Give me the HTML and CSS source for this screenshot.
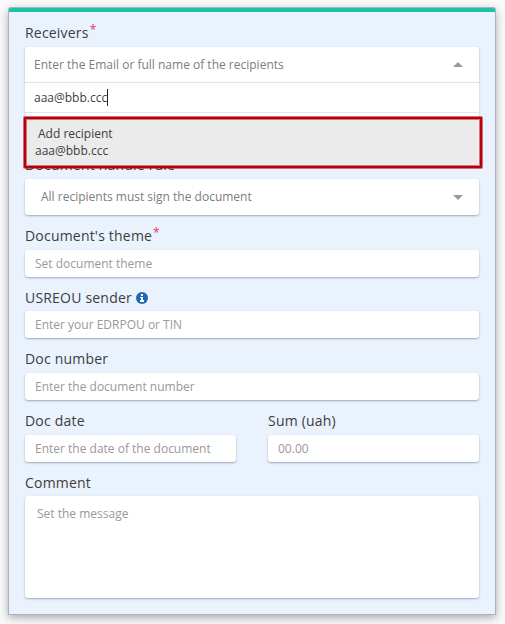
FILE: index.html
```html
<!DOCTYPE html>
<html lang="en">
<head>
<meta charset="utf-8">
<title>Document details</title>
<link rel="stylesheet" href="styles.css">
</head>
<body>
<form class="card">
  <div class="field">
    <div class="label">Receivers<span class="required">*</span></div>
    <div class="select open">
      <span>Enter the Email or full name of the recipients</span>
      <svg class="arrow" viewBox="0 0 10 5"><path d="M0 5 5 0l5 5z"/></svg>
      <div class="dropdown">
        <div class="search"><span class="typed">aaa@bbb.ccc</span><span class="caret"></span></div>
        <div class="option"><span class="option-title">Add recipient</span><span>aaa@bbb.ccc</span></div>
      </div>
    </div>
  </div>
  <div class="field rule">
    <div class="label">Document handle rule</div>
    <div class="select indented">
      <span>All recipients must sign the document</span>
      <svg class="arrow" viewBox="0 0 10 5"><path d="M0 0h10L5 5z"/></svg>
    </div>
  </div>
  <div class="field">
    <div class="label">Document's theme<span class="required">*</span></div>
    <div class="input">Set document theme</div>
  </div>
  <div class="field">
    <div class="label tight">USREOU sender
      <svg class="info" viewBox="0 0 12 12"><circle cx="6" cy="6" r="6" fill="#2068b3"/><path fill="#fff" d="M5 2h2v2H5zM4 5h3v3h1v2H4V8h1V6H4z"/></svg>
    </div>
    <div class="input">Enter your EDRPOU or TIN</div>
  </div>
  <div class="field">
    <div class="label">Doc number</div>
    <div class="input">Enter the document number</div>
  </div>
  <div class="columns">
    <div class="field">
      <div class="label">Doc date</div>
      <div class="input">Enter the date of the document</div>
    </div>
    <div class="field">
      <div class="label">Sum (uah)</div>
      <div class="input">00.00</div>
    </div>
  </div>
  <div class="field">
    <div class="label tight">Comment</div>
    <div class="textarea">Set the message</div>
  </div>
</form>
</body>
</html>
```
FILE: styles.css
```css
* { box-sizing: border-box; }

body {
  margin: 0;
  height: 624px;
  padding: 8px 10px 10px 9px;
  overflow: hidden;
  background: #f9f9fb;
  color: #3d3d3d;
  font: 12px/18px "Open Sans", "Noto Sans", sans-serif;
}

.card {
  height: 606px;
  padding: 11px 16px 16px;
  border-top: 4px solid #1cc4a3;
  border-radius: 2px 2px 0 0;
  background: #eaf2fe;
  box-shadow: 0 0 0 1px #a9b2bd, 0 3px 9px 1px rgba(0, 0, 0, .3);
  display: flex;
  flex-direction: column;
  gap: 11px;
}

.label {
  height: 24px;
  font-size: 14px;
  line-height: 20px;
  letter-spacing: .2px;
  white-space: nowrap;
}

.label.tight { height: 23px; }

.required {
  margin-left: 1px;
  color: #dc3560;
  font-size: 12px;
  line-height: 0;
  vertical-align: 4px;
}

.info {
  width: 12px;
  height: 12px;
  vertical-align: -1px;
}

.select,
.input,
.textarea {
  border-radius: 3px;
  background: #fff;
  box-shadow: 0 1px 2px rgba(60, 75, 95, .45);
}

.select {
  position: relative;
  display: flex;
  align-items: center;
  justify-content: space-between;
  height: 36px;
  padding: 0 16px 0 9px;
  color: #7d7d7d;
}

.select.indented { padding-left: 16px; }

.select.open {
  height: 35px;
  border-radius: 3px 3px 0 0;
}

.rule { margin-top: 62px; }

.arrow {
  width: 10px;
  height: 5px;
  fill: #999;
}

.dropdown {
  position: absolute;
  z-index: 1;
  top: 35px;
  left: 0;
  width: 454px;
  height: 82px;
  border-top: 1px solid #e2e4e7;
  background: #fff;
  color: #3d3d3d;
  box-shadow: 0 1px 2px rgba(60, 75, 95, .3);
}

.search {
  display: flex;
  align-items: center;
  height: 30px;
  padding-left: 9px;
  border-bottom: 1px solid #e2e4e7;
}

.caret {
  width: 1px;
  height: 17px;
  background: #222;
}

.option {
  display: flex;
  flex-direction: column;
  width: 458px;
  height: 51px;
  margin: 4px 0 0 -1px;
  padding: 6px 9px;
  border: 2px solid #b90005;
  border-radius: 1px;
  background: #ebebeb;
  box-shadow: 0 0 0 1px rgba(185, 0, 5, .55), inset 0 0 0 1px rgba(185, 0, 5, .5);
  line-height: 17px;
}

.option-title { padding-left: 3px; }

.input {
  height: 27px;
  padding: 0 10px;
  color: #999;
  line-height: 27px;
}

.columns {
  display: grid;
  grid-template-columns: 211px 211px;
  gap: 32px;
}

.textarea {
  height: 102px;
  padding: 9px 12px;
  color: #999;
}
```
